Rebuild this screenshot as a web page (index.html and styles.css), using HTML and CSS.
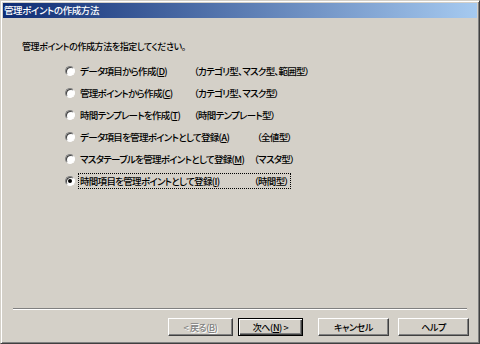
FILE: index.html
```html
<!DOCTYPE html>
<html lang="ja">
  <head>
    <meta charset="UTF-8" />
    <title>管理ポイントの作成方法</title>
    <link rel="stylesheet" href="styles.css">
  </head>
  <body>
    <div class="window">
      <div class="titlebar">管理ポイントの作成方法</div>
      <div class="body">
        <p class="lead">管理ポイントの作成方法を指定してください。</p>
        <ul class="options">
          <li class="option">
            <span class="radio"></span>
            <span class="text"><span class="label">データ項目から作成(<u>D</u>)</span><span class="kind">（カテゴリ型、マスク型、範囲型）</span></span>
          </li>
          <li class="option">
            <span class="radio"></span>
            <span class="text"><span class="label">管理ポイントから作成(<u>C</u>)</span><span class="kind">（カテゴリ型、マスク型）</span></span>
          </li>
          <li class="option">
            <span class="radio"></span>
            <span class="text"><span class="label">時間テンプレートを作成(<u>T</u>)</span><span class="kind">（時間テンプレート型）</span></span>
          </li>
          <li class="option wide">
            <span class="radio"></span>
            <span class="text"><span class="label">データ項目を管理ポイントとして登録(<u>A</u>)</span><span class="kind indent">（全値型）</span></span>
          </li>
          <li class="option wide">
            <span class="radio"></span>
            <span class="text"><span class="label">マスタテーブルを管理ポイントとして登録(<u>M</u>)</span><span class="kind">（マスタ型）</span></span>
          </li>
          <li class="option wide checked">
            <span class="radio"></span>
            <span class="text focus"><span class="label">時間項目を管理ポイントとして登録(<u>I</u>)</span><span class="kind">（時間型）</span></span>
          </li>
        </ul>
        <div class="footer">
          <div class="sep"></div>
          <div class="buttons">
            <button class="btn disabled">&lt; 戻る(<u>B</u>)</button>
            <button class="btn default">次へ(<u>N</u>) &gt;</button>
            <button class="btn wide-btn cancel">キャンセル</button>
            <button class="btn wide-btn">ヘルプ</button>
          </div>
        </div>
      </div>
    </div>
  </body>
</html>
```

FILE: styles.css
```css
body {
  margin: 0;
  background: #d4d0c8;
  font-family: "Noto Sans CJK JP", sans-serif;
  font-size: 9px;
  letter-spacing: -0.4px;
  font-feature-settings: "palt";
  font-weight: 500;
  color: #000;
}
.window {
  width: 480px;
  height: 344px;
  box-sizing: border-box;
  border: 1px solid;
  border-color: #d4d0c8 #404040 #404040 #d4d0c8;
  box-shadow: inset 1px 1px #fff, inset -1px -1px #808080;
  padding: 2px;
  display: flex;
  flex-direction: column;
}
.titlebar {
  height: 15px;
  line-height: 15px;
  padding-left: 1px;
  font-size: 9.5px;
  color: #fff;
  background: linear-gradient(to right, #0e2c74, #a6caf0);
}
.body {
  flex: 1;
  display: flex;
  flex-direction: column;
}
.lead {
  margin: 23px 0 0 19px;
  line-height: 12px;
}
.options {
  list-style: none;
  margin: 7px 0 0;
  padding-left: 62px;
  font-size: 9.5px;
  letter-spacing: -0.7px;
}
.option {
  height: 22px;
  display: flex;
  align-items: center;
}
.radio {
  width: 10px;
  height: 10px;
  box-sizing: border-box;
  border-radius: 50%;
  border: 1px solid;
  border-color: #808080 #fff #fff #808080;
  background: #fff;
  box-shadow: inset 1px 1px #404040;
  margin-right: 3px;
  position: relative;
}
.checked .radio::after {
  content: "";
  position: absolute;
  left: 2px;
  top: 2px;
  width: 4px;
  height: 4px;
  border-radius: 50%;
  background: #000;
}
.text {
  display: flex;
  white-space: nowrap;
  line-height: 14px;
  padding: 0 1px;
  border: 1px solid transparent;
}
.text.focus {
  border: 1px dotted #000;
}
.label {
  width: 114px;
}
.wide .label {
  width: 174px;
}
.kind.indent {
  margin-left: 3px;
}
.footer {
  margin-top: auto;
  padding: 0 8px 5px 10px;
}
.sep {
  border-top: 1px solid #808080;
  border-bottom: 1px solid #fff;
  margin-right: 2px;
}
.buttons {
  display: flex;
  justify-content: flex-end;
  margin-top: 8px;
}
.btn {
  width: 65px;
  height: 18px;
  padding: 0;
  box-sizing: border-box;
  background: #d4d0c8;
  font: inherit;
  letter-spacing: inherit;
  color: #000;
  border: 1px solid;
  border-color: #fff #404040 #404040 #fff;
  box-shadow: inset -1px -1px #808080;
  margin-left: 5px;
}
.btn.default {
  border: 1px solid #000;
  box-shadow: inset 1px 1px #fff, inset -1px -1px #404040, inset -2px -2px #808080;
}
.btn.disabled {
  color: #808080;
  text-shadow: 1px 1px #fff;
}
.wide-btn {
  width: 71px;
}
.cancel {
  margin-left: 15px;
}
.wide-btn + .wide-btn {
  margin-left: 9px;
}
```
